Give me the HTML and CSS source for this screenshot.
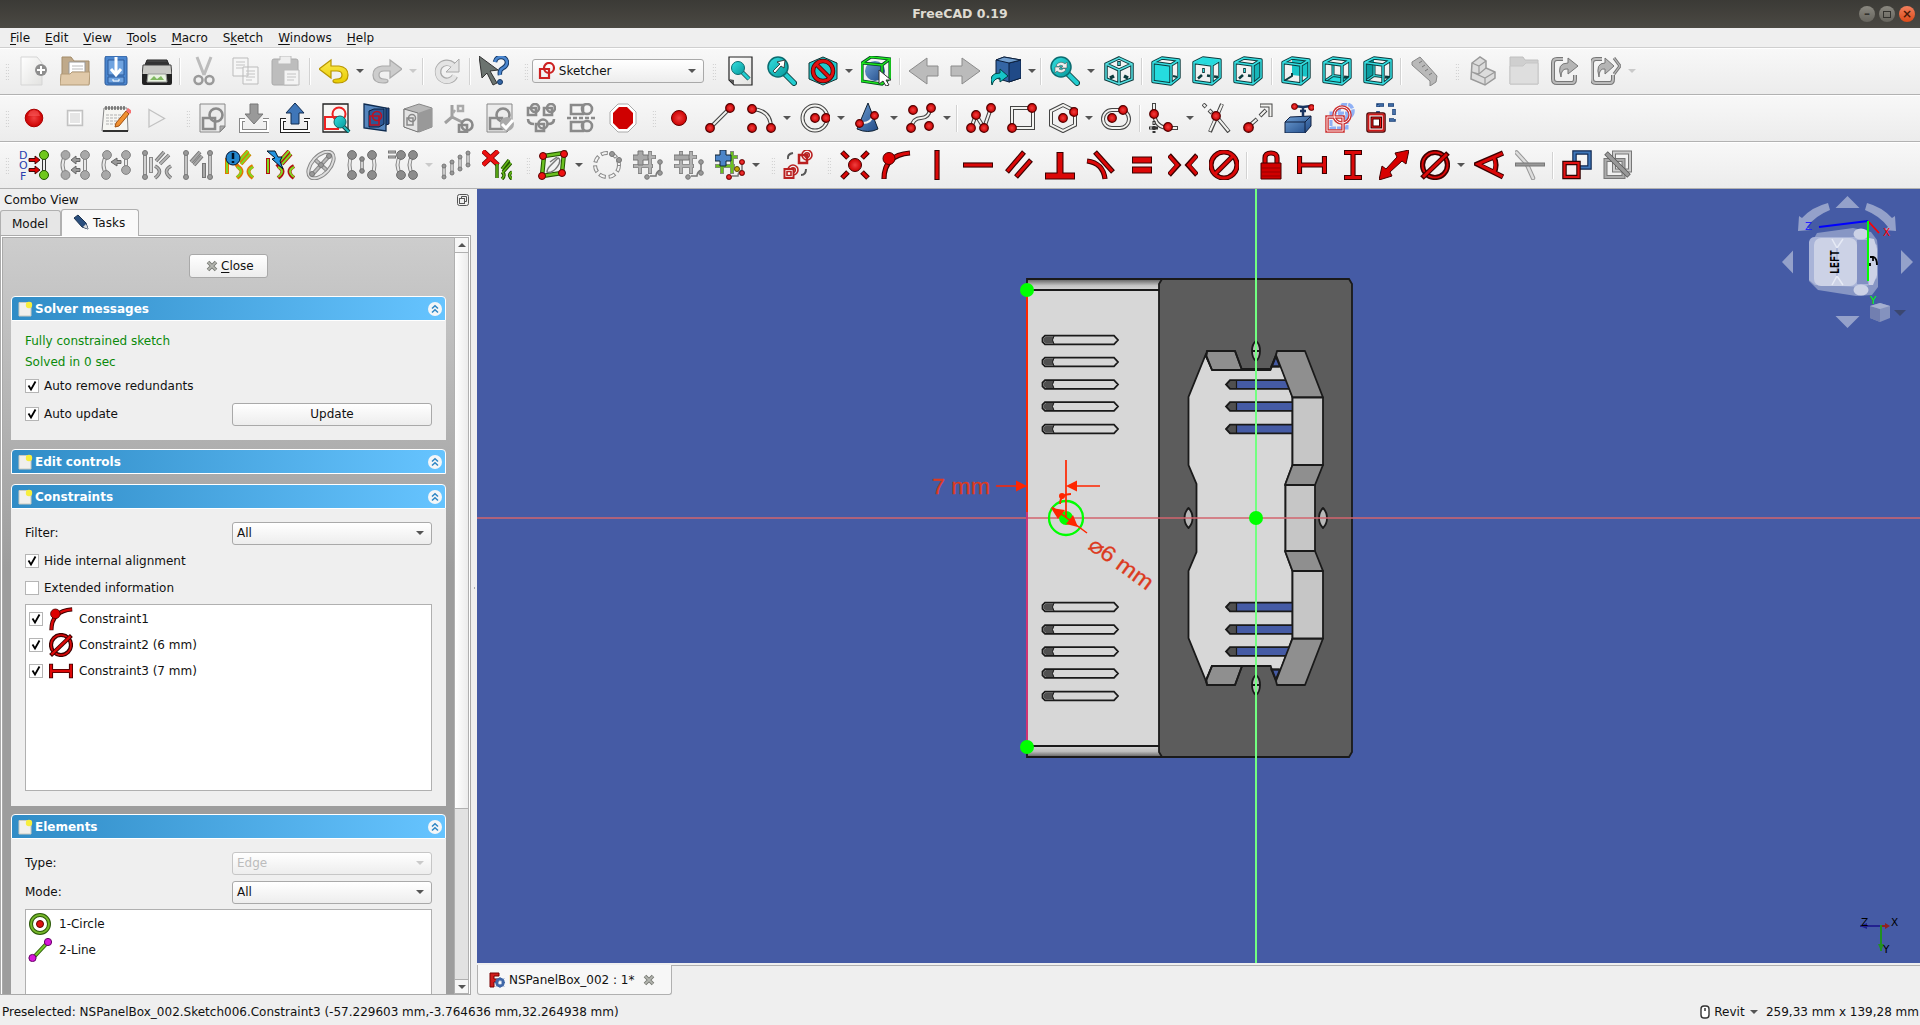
FILE: index.html
```html
<!DOCTYPE html>
<html lang="en">
<head>
<meta charset="utf-8">
<title>FreeCAD 0.19</title>
<link rel="stylesheet" href="styles.css">
</head>
<body>
<svg class="defs" width="0" height="0" aria-hidden="true">
<defs>
<linearGradient id="gPaper" x2="1" y2="1"><stop stop-color="#fff"/><stop offset="1" stop-color="#e2e2e0"/></linearGradient>
<linearGradient id="gBlue" x2="1" y2="1"><stop stop-color="#6f9fd4"/><stop offset="1" stop-color="#204a87"/></linearGradient>
<linearGradient id="gCyan" x2="1" y2="1"><stop stop-color="#34e0e2"/><stop offset="1" stop-color="#06989a"/></linearGradient>
<linearGradient id="gYel" x2="0" y2="1"><stop stop-color="#fce94f"/><stop offset="1" stop-color="#e8cc00"/></linearGradient>
<radialGradient id="gRed"><stop stop-color="#f04040"/><stop offset="1" stop-color="#c00"/></radialGradient>
</defs>
<!-- File and edit -->
<symbol id="new" viewBox="0 0 30 30"><path d="M2 1h16l5 6v22H2z" fill="url(#gPaper)" stroke="#d5d5d5"/><circle cx="22" cy="14" r="6" fill="#8e8e8e"/><path d="M22 10v8M18 14h8" stroke="#fff" stroke-width="2"/></symbol>
<symbol id="open" viewBox="0 0 30 30"><path d="M2 28V1h9l3 4h15v23z" fill="#bfa98a" stroke="#a38b68"/><path d="M9 6h16v17H9z" fill="#fff" stroke="#999"/><path d="M12 10h11M12 13h11M12 16h11" stroke="#bbb"/><path d="M0 29l1-11h9l2-2h18l-1 13z" fill="#e0c9a9" stroke="#b39b78"/></symbol>
<symbol id="save" viewBox="0 0 30 30"><rect x="4" y="0" width="22" height="29" rx="2" fill="#4a86cf" stroke="#2c5a9a"/><path d="M7 4h16v15H7zM7 21h16v6H7z" fill="#6fa3e0" stroke="#2c5a9a"/><path d="M15 1v17M10 13l5 6 5-6" stroke="#fff" stroke-width="3" fill="none"/><path d="M12 23v2h6v-2" stroke="#fff" fill="none"/></symbol>
<symbol id="print" viewBox="0 0 30 30"><path d="M5 4h20l2 5H3z" fill="#555" stroke="#222"/><path d="M1 9h28l1 11H0z" fill="#c9c9c5" stroke="#444"/><path d="M0 18h30v9q0 2-2 2H2q-2 0-2-2z" fill="#222"/><path d="M6 18h18l1 8H5z" fill="#e9f3e1" stroke="#999"/><path d="M8 24l4-4 3 3 4-3 3 4z" fill="#80b860"/><path d="M4 7h22" stroke="#333" stroke-width="3"/></symbol>
<symbol id="cut" viewBox="0 0 30 30"><path d="M8 1l7 18M22 1l-7 18" stroke="#bcbcbc" stroke-width="3"/><circle cx="9.500" cy="24" r="4" fill="none" stroke="#9a9a9a" stroke-width="2.500"/><circle cx="20.500" cy="24" r="4" fill="none" stroke="#9a9a9a" stroke-width="2.500"/></symbol>
<symbol id="copy" viewBox="0 0 30 30"><path d="M3 2h15v18H3zM13 11h15v17H13z" fill="#f6f6f6" stroke="#bbb"/><path d="M6 6h9M6 9h9M6 12h7M16 15h9M16 18h9M16 21h9M16 24h6" stroke="#c4c4c4"/></symbol>
<symbol id="paste" viewBox="0 0 30 30"><rect x="1" y="3" width="26" height="26" rx="2" fill="#bdbdbd" stroke="#aaa"/><path d="M9 0h11v8H7V4h2z" fill="#eee" stroke="#bbb"/><path d="M13 14h15v15H13z" fill="#f4f4f4" stroke="#bbb"/><path d="M16 18h9M16 21h9M16 24h7" stroke="#c4c4c4"/></symbol>
<symbol id="undo" viewBox="0 0 30 30"><path d="M0 13L12 4v6h8q9 1 9 9 0 8-10 8-5 0-5-2t4-2q5 0 5-4t-5-4h-6v7z" fill="url(#gYel)" stroke="#b89600" stroke-width="1.200"/></symbol>
<symbol id="redo" viewBox="0 0 30 30"><path d="M30 13L18 4v6h-8q-9 1-9 9 0 8 10 8 5 0 5-2t-4-2q-5 0-5-4t5-4h6v7z" fill="#ccc" stroke="#aaa" stroke-width="1.200"/></symbol>
<symbol id="refresh" viewBox="0 0 30 30"><path d="M23 20a9 9 0 1 1-2-11" fill="none" stroke="#aaa" stroke-width="6.500"/><path d="M27 3v13H14z" fill="#e4e4e4" stroke="#aaa"/><path d="M23 19.500a9 9 0 1 1-2-10" fill="none" stroke="#e4e4e4" stroke-width="4.500"/></symbol>
<symbol id="what" viewBox="0 0 30 30"><path d="M0 0l19 14-8 1 7 12-4 2-6-12-5 5z" fill="#6b736f" stroke="#333"/><path d="M16 6q1-5 6-5t6 5q0 4-4 6t-3 7" fill="none" stroke="#173a66" stroke-width="4.500"/><path d="M16 6q1-5 6-5t6 5q0 4-4 6t-3 7" fill="none" stroke="#4a86cf" stroke-width="2.500"/><circle cx="21" cy="26" r="2.500" fill="#3465a4" stroke="#173a66"/></symbol>
<!-- View -->
<symbol id="mag" viewBox="0 0 30 30"><path d="M17 17l10 10" stroke="#144" stroke-width="6" stroke-linecap="round"/><path d="M17 17l10 10" stroke="#22cdd0" stroke-width="4" stroke-linecap="round"/><circle cx="11" cy="11" r="10" fill="url(#gCyan)" stroke="#0b6c70" stroke-width="1.500"/></symbol>
<symbol id="fitall" viewBox="0 0 30 30"><path d="M3 1h23v28H8l-5-5z" fill="url(#gPaper)" stroke="#222" stroke-width="1.200"/><path d="M3 23l5 1v5z" fill="#555"/><path d="M15 15l8 8" stroke="#144" stroke-width="4.500"/><path d="M15 15l8 8" stroke="#22cdd0" stroke-width="3"/><circle cx="12" cy="12" r="6.500" fill="url(#gCyan)" stroke="#0b6c70"/></symbol>
<symbol id="fitsel" viewBox="0 0 30 30"><use href="#mag"/><path d="M6 15l7-7-3-2 8-2-1 8-3-2-6 7z" fill="#fff" stroke="#222" stroke-width=".8"/></symbol>
<symbol id="sync" viewBox="0 0 30 30"><use href="#mag"/><path d="M6 9q5-5 9-1l2-2v6h-6l2-2q-3-2-5 1zM16 14q-5 5-9 1l-2 2v-6h6l-2 2q3 2 5-1z" fill="#eee" stroke="#444" stroke-width=".5"/></symbol>
<symbol id="style" viewBox="0 0 30 30"><path d="M15 1l14 6v16l-14 6-14-6V7z" fill="#20c8cc" stroke="#133"/><circle cx="15" cy="15" r="10" fill="none" stroke="#400" stroke-width="4.500"/><path d="M8 8l14 14" stroke="#400" stroke-width="4.500"/><circle cx="15" cy="15" r="10" fill="none" stroke="#e01010" stroke-width="2.800"/><path d="M8 8l14 14" stroke="#e01010" stroke-width="2.800"/></symbol>
<symbol id="bbox" viewBox="0 0 30 30"><circle cx="14" cy="15" r="10" fill="url(#gBlue)"/><path d="M1 7l9-6 19 2v19l-8 6-20-3zM1 7l20 2v19M21 9l8-6" fill="none" stroke="#042" stroke-width="3.200"/><path d="M1 7l9-6 19 2v19l-8 6-20-3zM1 7l20 2v19M21 9l8-6" fill="none" stroke="#1ce61c" stroke-width="1.500"/><path d="M18 14l12 10h-5l3 5-3 1-3-5-4 3z" fill="#fff" stroke="#333"/></symbol>
<symbol id="back" viewBox="0 0 30 30"><path d="M0 15L18 2v8h11v10H18v8z" fill="#bbb" stroke="#8b8b8b"/></symbol>
<symbol id="fwd" viewBox="0 0 30 30"><path d="M30 15L12 2v8H1v10h11v8z" fill="#bbb" stroke="#8b8b8b"/></symbol>
<symbol id="golink" viewBox="0 0 30 30"><path d="M5 4l8-3 17 3v18l-12 4-13-4z" fill="#3465a4" stroke="#0b1f3c"/><path d="M18 7l12-3v18l-12 4z" fill="#204a87" stroke="#0b1f3c"/><path d="M5 4l8-3 17 3-12 3z" fill="#729fcf" stroke="#0b1f3c"/><path d="M1 29q-4-12 8-12v-4l8 7-8 6v-4q-6 0-8 7z" fill="#16c6c8" stroke="#044"/></symbol>
<symbol id="cube" viewBox="0 0 30 30"><path d="M2 6.500L11 2l17 2v17.500L20 28 2 25.500zM2 6.500L20 9l8-5M20 9v19" fill="none" stroke="#0d3b3d" stroke-width="3.400" stroke-linejoin="round"/><path d="M2 6.500L11 2l17 2v17.500L20 28 2 25.500zM2 6.500L20 9l8-5M20 9v19" fill="none" stroke="#35dfe2" stroke-width="1.500" stroke-linejoin="round"/></symbol>
<symbol id="hid" viewBox="0 0 30 30"><path d="M11.500 12v5M6 22.500l4-3.500M15 19.500l3 .5M22 20.500l4 .5" stroke="#0d3b3d" stroke-width="2.600"/><path d="M11.500 13v3" stroke="#35dfe2"/></symbol>
<symbol id="bk" viewBox="0 0 30 30"><path d="M11 9v10.500L3 25M11 19.500L19 20.500M22 21l5 .5" fill="none" stroke="#0d3b3d" stroke-width="3"/><path d="M11 9v10.500L3 25M11 19.500L19 20.500" fill="none" stroke="#35dfe2" stroke-width="1.200"/></symbol>
<symbol id="iso" viewBox="0 0 30 30"><path d="M15 2l13 6v15l-13 5-13-5V8zM2 8l13 6 13-6M15 14v14M15 5v5M6 22l4-2M20 20l4 2" fill="none" stroke="#0d3b3d" stroke-width="3.500"/><path d="M15 2l13 6v15l-13 5-13-5V8zM2 8l13 6 13-6M15 14v14M15 6v3" fill="none" stroke="#55e0e2" stroke-width="1.500"/></symbol>
<symbol id="vfront" viewBox="0 0 30 30"><path d="M2 6.500L20 9v19L2 25.500z" fill="#25dcdf"/><path d="M22 20l4 1" stroke="#0d3b3d" stroke-width="2"/><use href="#cube"/></symbol>
<symbol id="vtop" viewBox="0 0 30 30"><use href="#hid"/><use href="#cube"/><path d="M3 6.500L11 2l16 2-7 4.500z" fill="#25dcdf"/></symbol>
<symbol id="vright" viewBox="0 0 30 30"><use href="#hid"/><path d="M20 9l8-5v17.500L20 28z" fill="#16b6b9"/><use href="#cube"/></symbol>
<symbol id="vrear" viewBox="0 0 30 30"><path d="M11 2l17 2v17l-17-2z" fill="#19c5c8"/><path d="M11 17v3l-8 5" fill="none" stroke="#0d3b3d" stroke-width="2"/><use href="#cube"/></symbol>
<symbol id="vbottom" viewBox="0 0 30 30"><path d="M2 25.500l9-6 17 2L20 28z" fill="#25dcdf"/><use href="#bk"/><use href="#cube"/></symbol>
<symbol id="vleft" viewBox="0 0 30 30"><path d="M2 6.500L11 2v17.500l-9 6z" fill="#0c9c9f"/><use href="#bk"/><use href="#cube"/></symbol>
<symbol id="ruler" viewBox="0 0 30 30"><path d="M2 6l8-5 17 19-1 6-6 4v-5L2 9z" fill="#b9b9b9" stroke="#888"/><path d="M9 7l3-2M12 11l3-2M15 15l3-2M19 19l3-2" stroke="#777"/></symbol>
<symbol id="part" viewBox="0 0 30 30"><path d="M4 7l8-6 6 4v7l9 4v6l-10 7-14-6z" fill="#dcdcdc" stroke="#9a9a9a" stroke-width="1.500"/><path d="M4 7l7 3 7-5M11 10v8l7-6M4 16l13 6 10-6M17 22v7M11 18l-7-2" fill="none" stroke="#9a9a9a" stroke-width="1.200"/></symbol>
<symbol id="group" viewBox="0 0 30 30"><path d="M1 28V1h13l2 3h13v24z" fill="#cfcfcf" stroke="#c0c0c0"/><path d="M1 10h13l3-3h12v21H1z" fill="#dedede" stroke="#c6c6c6"/></symbol>
<symbol id="lnk" viewBox="0 0 30 30"><path d="M13 3H7q-4 0-4 4v16q0 4 4 4h15q3 0 3-4v-4" fill="none" stroke="#777" stroke-width="4"/><path d="M13 3H7q-4 0-4 4v16q0 4 4 4h15q3 0 3-4v-4" fill="none" stroke="#bbb" stroke-width="2"/><path d="M11 21q-5-14 7-14V2l10 8-10 8v-5q-7-1-7 8z" fill="#b5b5b5" stroke="#777"/></symbol>
<symbol id="lnks" viewBox="0 0 30 30"><path d="M11 3H5q-4 0-4 4v16q0 4 4 4h14q3 0 3-4v-4" fill="none" stroke="#777" stroke-width="4"/><path d="M11 3H5q-4 0-4 4v16q0 4 4 4h14q3 0 3-4v-4" fill="none" stroke="#bbb" stroke-width="2"/><path d="M8 21Q4 7 14 7V2l9 8-9 8v-5q-6-1-6 8z" fill="#b5b5b5" stroke="#777"/><path d="M23 2l6 8-6 8" fill="none" stroke="#777" stroke-width="3"/><path d="M23 2l6 8-6 8" fill="none" stroke="#bbb" stroke-width="1.200"/></symbol>
<!-- Macro -->
<symbol id="rec" viewBox="0 0 30 30"><circle cx="15" cy="15" r="8.800" fill="url(#gRed)" stroke="#a00"/><path d="M9 13q1-6 6-6t6 6" fill="#f66" opacity=".5"/></symbol>
<symbol id="stop" viewBox="0 0 30 30"><path d="M7.500 7.500h15v15h-15z" fill="#eee" stroke="#c2c2c2" stroke-width="1.500"/><path d="M9.500 9.500h11v11h-11z" fill="#e6e6e6" stroke="#fff"/></symbol>
<symbol id="edit" viewBox="0 0 30 30"><path d="M3 5h23l1 23H1z" fill="#f6f6f2" stroke="#888"/><path d="M2 28h25" stroke="#222" stroke-width="1.800"/><path d="M5 7V3m3 4V3m3 4V3m3 4V3m3 4V3m3 4V3m3 4V3" stroke="#555" stroke-width="1.300"/><path d="M5 12h17M5 15h14M5 18h12M5 21h10" stroke="#b0b0b0" stroke-dasharray="3 1"/><path d="M15 20L25 8l3 3-10 12-4 1z" fill="#f09030" stroke="#a05010"/><path d="M25 8l2-3 4 3-2 3z" fill="#f57070"/></symbol>
<symbol id="play" viewBox="0 0 30 30"><path d="M7 6.500l15.500 9L7 24z" fill="#f2f2f2" stroke="#c2c2c2" stroke-width="1.300"/></symbol>
<!-- Sketcher -->
<symbol id="skg" viewBox="0 0 30 30"><path d="M2 1h25v23l-5 5H2z" fill="#ececec" stroke="#888"/><circle cx="18" cy="12" r="6.500" class="sk3"/><path d="M5 15h12v11H5z" class="sk3"/><path d="M27 23l-5 6v-6z" fill="#aaa" stroke="#888"/></symbol>
<symbol id="tray" viewBox="0 0 30 30"><path d="M6 17H2v11h27V17h-5" fill="none" stroke="currentColor" stroke-width="4"/><path d="M6 17H2v11h27V17h-5" fill="none" stroke="#fff" stroke-width="2"/></symbol>
<symbol id="tin" viewBox="0 0 30 30"><use href="#tray" color="#888"/><path d="M11 1h8v10h5l-9 10-9-10h5z" fill="#999" stroke="#777"/></symbol>
<symbol id="tout" viewBox="0 0 30 30"><use href="#tray" color="#222"/><path d="M15 0l9 10h-5v11h-8V10H6z" fill="#3f76b8" stroke="#102c50"/></symbol>
<symbol id="skv" viewBox="0 0 30 30"><path d="M2 1h25v28H2z" fill="#f6f6f4" stroke="#222" stroke-width="1.300"/><circle cx="18" cy="11" r="6.500" fill="none" stroke="#e22" stroke-width="2"/><path d="M4 14h13v12H4z" fill="none" stroke="#e22" stroke-width="2"/><path d="M22 23l6 6" stroke="#144" stroke-width="4"/><path d="M22 23l6 6" stroke="#20b8ba" stroke-width="2"/><circle cx="19" cy="19" r="6" fill="url(#gCyan)" stroke="#166"/></symbol>
<symbol id="sect" viewBox="0 0 30 30"><path d="M15 6l12-1v16l-6 2z" fill="#204a87" stroke="#102040"/><path d="M2 1l22 4v23L2 25z" fill="#5585bd" stroke="#102c50" stroke-width="1.300"/><path d="M7 8l5-2h10v15l-5 3H7z" fill="#2d5896" stroke="#0b1f3c"/><circle cx="15" cy="13" r="4.500" fill="none" stroke="#c01020" stroke-width="1.600"/><path d="M8 13h9v9H8z" fill="none" stroke="#c01020" stroke-width="1.600"/></symbol>
<symbol id="mapf" viewBox="0 0 30 30"><path d="M1 6l15-5 13 4v19l-13 5-15-5z" fill="#b8b8b8" stroke="#888"/><path d="M1 6l14 4v19L1 24z" fill="#e4e4e4" stroke="#777"/><path d="M15 10l14-5v19l-13 5z" fill="#999"/><circle cx="9" cy="15" r="3.500" fill="none" stroke="#888" stroke-width="1.500"/><path d="M4 15h6v7H4z" fill="none" stroke="#888" stroke-width="1.500"/></symbol>
<symbol id="reor" viewBox="0 0 30 30"><path d="M8 2v12L1 20M8 14l10 5" fill="none" stroke="#a0a0a0" stroke-width="3"/><path d="M14 3h5v5h-5zM11 7l-2 3" fill="none" stroke="#aaa" stroke-width="2.500"/><circle cx="23" cy="22" r="5.500" class="sk3"/><path d="M15 22h8v7h-8z" class="sk3"/></symbol>
<symbol id="vali" viewBox="0 0 30 30"><use href="#skg"/><circle cx="22" cy="21" r="7" fill="#aaa"/><path d="M17 21l4 4 7-8" fill="none" stroke="#fff" stroke-width="3"/></symbol>
<symbol id="merge" viewBox="0 0 30 30"><g class="sk3"><circle cx="9" cy="5" r="4"/><path d="M2 5h8v7H2z"/><circle cx="25" cy="5" r="4"/><path d="M18 5h8v7h-8z"/><circle cx="17" cy="21" r="4.500"/><path d="M10 21h8v7h-8zM2 16q0 5 6 5M28 16q0 5-6 5"/></g></symbol>
<symbol id="mirr" viewBox="0 0 30 30"><g class="sk3"><path d="M4 2h12v9H4zM4 19h12v9H4z"/><circle cx="20" cy="6" r="5"/><circle cx="20" cy="23" r="5"/><path d="M0 15h30" stroke-dasharray="4 2"/></g></symbol>
<symbol id="stopsign" viewBox="0 0 30 30"><path d="M10 1h10l8 8v12l-8 8H10l-8-8V9z" fill="#fff" stroke="#aaa"/><path d="M11 4h8l6 6v10l-6 6h-8l-6-6V10z" fill="#cf0000"/></symbol>
<symbol id="nd" viewBox="0 0 10 10"><circle cx="5" cy="5" r="4.300" fill="url(#gRed)" stroke="#500" stroke-width="1.200"/></symbol>
<symbol id="point" viewBox="0 0 30 30"><circle cx="15" cy="15" r="7.500" fill="url(#gRed)" stroke="#600"/></symbol>
<symbol id="line" viewBox="0 0 30 30"><path d="M5 25L25 5" class="k"/><path d="M5 25L25 5" class="w"/><use href="#nd" x="0" y="20" width="10" height="10"/><use href="#nd" x="20" y="0" width="10" height="10"/></symbol>
<symbol id="arc" viewBox="0 0 30 30"><path d="M6 6q19 1 19 19" class="k"/><path d="M6 6q19 1 19 19" class="w"/><use href="#nd" x="1" y="1" width="10" height="10"/><use href="#nd" x="1" y="20" width="10" height="10"/><use href="#nd" x="20" y="20" width="10" height="10"/></symbol>
<symbol id="circ" viewBox="0 0 30 30"><circle cx="15" cy="15" r="12.500" class="k"/><circle cx="15" cy="15" r="12.500" class="w"/><use href="#nd" x="10" y="10" width="10" height="10"/><use href="#nd" x="21" y="10" width="10" height="10"/></symbol>
<symbol id="conic" viewBox="0 0 30 30"><path d="M15 0l10 26q-10 5-21 0z" fill="url(#gBlue)" stroke="#123"/><path d="M8 20q10 1 12-8" class="w"/><use href="#nd" x="2" y="16" width="9" height="9"/><use href="#nd" x="17" y="8" width="9" height="9"/></symbol>
<symbol id="bsp" viewBox="0 0 30 30"><path d="M5 25q2-10 10-10t9-9" class="k"/><path d="M5 25q2-10 10-10t9-9" class="w"/><use href="#nd" x="2" y="2" width="10" height="10"/><use href="#nd" x="0" y="20" width="10" height="10"/><use href="#nd" x="20" y="0" width="10" height="10"/><use href="#nd" x="18" y="18" width="10" height="10"/></symbol>
<symbol id="pline" viewBox="0 0 30 30"><path d="M5 25l5-13 8 13 7-20" class="k"/><path d="M5 25l5-13 8 13 7-20" class="w"/><use href="#nd" x="0" y="20" width="10" height="10"/><use href="#nd" x="5" y="7" width="10" height="10"/><use href="#nd" x="13" y="20" width="10" height="10"/><use href="#nd" x="20" y="0" width="10" height="10"/></symbol>
<symbol id="rect" viewBox="0 0 30 30"><path d="M5 5h21v20H5z" class="k"/><path d="M5 5h21v20H5z" class="w"/><use href="#nd" x="0" y="20" width="10" height="10"/><use href="#nd" x="20" y="0" width="10" height="10"/></symbol>
<symbol id="hex" viewBox="0 0 30 30"><path d="M15 2l12 6v14l-12 6-12-6V8z" class="k"/><path d="M15 2l12 6v14l-12 6-12-6V8z" class="w"/><use href="#nd" x="10" y="10" width="10" height="10"/><use href="#nd" x="21" y="4" width="10" height="10"/></symbol>
<symbol id="slot" viewBox="0 0 30 30"><rect x="2" y="7" width="26" height="18" rx="9" class="k"/><rect x="2" y="7" width="26" height="18" rx="9" class="w"/><use href="#nd" x="6" y="10" width="10" height="10"/><use href="#nd" x="17" y="2" width="10" height="10"/></symbol>
<symbol id="fillet" viewBox="0 0 30 30"><path d="M5 0v10q1 15 15 15h9" class="k"/><path d="M5 1v9q1 15 15 15h8" class="w"/><path d="M5 18v12M0 25h10" stroke="#333" stroke-width="3" stroke-dasharray="4 1"/><path d="M5 19v2M1 25h2" stroke="#fff"/><use href="#nd" x="0" y="6" width="10" height="10"/><use href="#nd" x="14" y="19" width="10" height="10"/></symbol>
<symbol id="trim" viewBox="0 0 30 30"><path d="M20 1L8 29M14 13l13 16" class="k"/><path d="M20 1.500L8 28M14 13l12.500 15" class="w"/><path d="M1 1l3 3M7 7l3 3" class="k"/><path d="M1.500 1.500l2 2M7.500 7.500l2 2" class="w"/><use href="#nd" x="9" y="8" width="10" height="10"/></symbol>
<symbol id="extend" viewBox="0 0 30 30"><path d="M17 2.500h10.500V14" class="k"/><path d="M17.500 2.500h10v11" class="w"/><path d="M5 24l9-8M17 13l6-6" class="k"/><path d="M5 24l8.500-7.500M17.500 12.500l5-5" class="w"/><use href="#nd" x="0" y="19" width="11" height="11"/></symbol>
<symbol id="ext" viewBox="0 0 30 30"><path d="M1 19l5-5 21-1v10l-6 7H1z" fill="url(#gBlue)" stroke="#102040"/><path d="M1 19h20v10M21 19l6-6" stroke="#102040" fill="none"/><path d="M10 3l9 1 8-1M19 4v10M16 8h6" stroke="#1a3560" stroke-width="2.500" fill="none"/><use href="#nd" x="7" y="0" width="7" height="7"/><use href="#nd" x="24" y="1" width="7" height="7"/></symbol>
<symbol id="carbon" viewBox="0 0 30 30"><circle cx="21" cy="8" r="7" fill="none" stroke="#8fb0f5" stroke-width="3.500" stroke-dasharray="6 1"/><path d="M6 10h16v15H6z" fill="none" stroke="#8fb0f5" stroke-width="3" stroke-dasharray="6 1"/><circle cx="17" cy="12" r="8" fill="none" stroke="#c33" stroke-width="3.500"/><path d="M2 14h16v14H2z" fill="none" stroke="#c33" stroke-width="3.500"/><circle cx="17" cy="12" r="8" fill="none" stroke="#fee"/><path d="M2 14h16v14H2z" fill="none" stroke="#fee"/></symbol>
<symbol id="constr" viewBox="0 0 30 30"><path d="M12 2h16v15H12z" fill="none" stroke="#153c74" stroke-width="3.500" stroke-dasharray="6 4"/><path d="M12 2h16v15H12z" fill="none" stroke="#6b96d0" stroke-width="1.200" stroke-dasharray="5 5" stroke-dashoffset="-.5"/><rect x="1" y="10" width="18" height="19" rx="2" fill="#fff" stroke="#400" stroke-width="1.500"/><rect x="2.500" y="11.500" width="15" height="16" fill="#fff" stroke="#d01818" stroke-width="1.800"/><path d="M6 15h8.500v9H6z" fill="#fff" stroke="#400" stroke-width="3"/><path d="M6 15h8.500v9H6z" fill="none" stroke="#e11"/></symbol>
<!-- Sketcher tools -->
<symbol id="dof" viewBox="0 0 30 30"><g class="doft"><text x="0" y="9">D</text><text x="0" y="19">O</text><text x="1" y="29.500">F</text></g><path d="M25 5v20" stroke="#333" stroke-width="4"/><path d="M25 5v20" stroke="#eee" stroke-width="2"/><path d="M10 8.500h6V6l5 4-5 4v-2.500h-6zM10 18.500h6V16l5 4-5 4v-2.500h-6z" fill="#d00" stroke="#300" stroke-width=".9"/><circle cx="25" cy="5" r="4.500" fill="#6fc81c" stroke="#250"/><circle cx="25" cy="25" r="4.500" fill="#6fc81c" stroke="#250"/></symbol>
<symbol id="g4" viewBox="0 0 30 30"><path d="M6 5q-7 10 0 20M25 5v20" stroke="#888" stroke-width="4" fill="none"/><path d="M6 5q-7 10 0 20M25 5v20" stroke="#e8e8e8" stroke-width="2" fill="none"/><g fill="#a8a8a8" stroke="#828282"><circle cx="5.500" cy="5" r="4.400"/><circle cx="5.500" cy="25" r="4.400"/><circle cx="25" cy="5" r="4.400"/><circle cx="25" cy="25" r="4.400"/></g></symbol>
<symbol id="ga" viewBox="0 0 30 30"><use href="#g4"/><path d="M20 8.500h-4V6l-5 4 5 4v-2.500h4zM20 18.500h-4V16l-5 4 5 4v-2.500h4z" fill="#999" stroke="#666"/></symbol>
<symbol id="gb" viewBox="0 0 30 30"><path d="M6 5q-7 10 0 20M25 5v15" stroke="#888" stroke-width="4" fill="none"/><path d="M6 5q-7 10 0 20M25 5v15" stroke="#e8e8e8" stroke-width="2" fill="none"/><g fill="#a8a8a8" stroke="#828282"><circle cx="6" cy="5" r="4.400"/><circle cx="5" cy="25" r="4.400"/><circle cx="25" cy="5" r="4.400"/><circle cx="25" cy="20" r="4.400"/></g><path d="M20 10.500h-4V8l-6 4 6 4v-2.500h4z" fill="#999" stroke="#666"/></symbol>
<symbol id="gwedge" viewBox="0 0 30 30"><path d="M14 11l8-9M18 14l9-9M13 16q9 5 0 12M29 16q-9 5 0 12" stroke="#777" stroke-width="3.600" fill="none"/><path d="M14 11l8-9M18 14l9-9M13 16q9 5 0 12M29 16q-9 5 0 12" stroke="#b5b5b5" stroke-width="1.800" fill="none"/></symbol>
<symbol id="gc" viewBox="0 0 30 30"><path d="M3 3v24M9 7v16" stroke="#888" stroke-width="4"/><path d="M3 3v24M9 8v14" stroke="#d2d2d2" stroke-width="2"/><use href="#gwedge"/><g fill="#999" stroke="#777"><circle cx="3" cy="3" r="2.500"/><circle cx="3" cy="27" r="2.500"/></g></symbol>
<symbol id="gd" viewBox="0 0 30 30"><path d="M3 3v24M27 3v24" stroke="#777" stroke-width="3.600"/><path d="M3 3v24M27 3v24" stroke="#e0e0e0" stroke-width="1.500"/><path d="M8 12l9-10M11 15l8-9M21 13v15" stroke="#777" stroke-width="4"/><path d="M8 12l9-10M11 15l8-9M21 14v13" stroke="#a8a8a8" stroke-width="2"/><g fill="#999" stroke="#777"><circle cx="3" cy="3" r="2.500"/><circle cx="3" cy="27" r="2.500"/><circle cx="27" cy="3" r="2.500"/><circle cx="27" cy="27" r="2.500"/></g></symbol>
<symbol id="cfl" viewBox="0 0 30 30"><path d="M3 8v16M15 11l9-10M17 14l9-10M12 14l4 5M13 16q9 5 0 12M29 16q-9 5 0 12" stroke="currentColor" stroke-width="4" fill="none"/><path d="M3 9v14M15 11l9-10M17 14l9-10M13 17q8 4 0 10M29 17q-8 4 0 10" stroke="#80d820" stroke-width="2" fill="none"/></symbol>
<symbol id="warn" viewBox="0 0 30 30"><use href="#cfl" color="#e07800"/><circle cx="9" cy="8" r="7" fill="#2486cc" stroke="#013"/><path d="M9 3v6M9 11v2" stroke="#012" stroke-width="2.500"/></symbol>
<symbol id="bolt" viewBox="0 0 30 30"><use href="#cfl" color="#b01010"/><path d="M2 1h8l3 6 4 0-2 4 3 8L7 9l3-1z" fill="#2494e0" stroke="#012"/></symbol>
<symbol id="ell" viewBox="0 0 30 30"><g transform="rotate(-48 15 15)" fill="none"><ellipse cx="15" cy="15" rx="16" ry="9" stroke="#888" stroke-width="4"/><ellipse cx="15" cy="15" rx="16" ry="9" stroke="#ddd" stroke-width="2"/><path d="M3 15h24M15 7v16" stroke="#888" stroke-width="4"/><path d="M4 15h22M15 8v14" stroke="#bbb" stroke-width="2"/></g><g fill="#999" stroke="#777"><circle cx="15" cy="15" r="2.500"/><circle cx="6" cy="24" r="2.500"/><circle cx="23" cy="6" r="2.500"/></g></symbol>
<symbol id="symg" viewBox="0 0 30 30"><path d="M5 5q-5 10 0 20M25 5q5 10 0 20" stroke="#888" stroke-width="4" fill="none"/><path d="M5 5q-5 10 0 20M25 5q5 10 0 20" stroke="#e8e8e8" stroke-width="2" fill="none"/><path d="M15 9v13" stroke="#777" stroke-width="3.500"/><path d="M15 9v13" stroke="#eee" stroke-width="1.500"/><g fill="#8c8c8c" stroke="#6c6c6c"><circle cx="5" cy="5" r="4.400"/><circle cx="5" cy="25" r="4.400"/><circle cx="25" cy="5" r="4.400"/><circle cx="25" cy="25" r="4.400"/><circle cx="15" cy="9" r="2.300"/><circle cx="15" cy="21" r="2.300"/></g></symbol>
<symbol id="clone" viewBox="0 0 30 30"><path d="M0 2h8M0 7h8" stroke="#777" stroke-width="3.200"/><path d="M1 2h6M1 7h6" stroke="#bbb" stroke-width="1.200"/><path d="M13 5q-7 10 0 20M25 5q-7 10 0 20" stroke="#888" stroke-width="4" fill="none"/><path d="M13 5q-7 10 0 20M25 5q-7 10 0 20" stroke="#e8e8e8" stroke-width="2" fill="none"/><g fill="#8c8c8c" stroke="#6c6c6c"><circle cx="13" cy="5" r="4.400"/><circle cx="13" cy="25" r="4.400"/><circle cx="25" cy="5" r="4.400"/><circle cx="25" cy="25" r="4.400"/></g></symbol>
<symbol id="rarr" viewBox="0 0 30 30"><path d="M3 16v11M11 12v11M19 7v12M27 3v12" stroke="#888" stroke-width="3.500"/><path d="M3 16v11M11 12v11M19 7v12M27 3v12" stroke="#ddd" stroke-width="1.500"/><g fill="#999" stroke="#777"><circle cx="3" cy="16" r="2"/><circle cx="3" cy="27" r="2"/><circle cx="11" cy="12" r="2"/><circle cx="11" cy="23" r="2"/><circle cx="19" cy="7" r="2"/><circle cx="19" cy="19" r="2"/><circle cx="27" cy="3" r="2"/><circle cx="27" cy="15" r="2"/></g></symbol>
<symbol id="delc" viewBox="0 0 30 30"><path d="M1 1l15 14M16 1L1 15" stroke="#700" stroke-width="5"/><path d="M1 1l15 14M16 1L1 15" stroke="#e11" stroke-width="3.500"/><path d="M15 14v14M20 19l7-9M21 22l8-9M20 22q4 3 0 7M30 22q-5 3 0 7" stroke="#250" stroke-width="3.500" fill="none"/><path d="M15 14v14M20 19l7-9M21 22l8-9M20 22q4 3 0 7M30 22q-5 3 0 7" stroke="#65b818" stroke-width="1.500" fill="none"/></symbol>
<symbol id="bpoly" viewBox="0 0 30 30"><path d="M4 26L6 6l20-3-2 20z" fill="none" stroke="#250" stroke-width="4.500"/><path d="M4 26L6 6l20-3-2 20z" fill="none" stroke="#6bc020" stroke-width="2.500"/><path d="M9 22q0-3 4-7t7-7q3 1 1 6-3 6-8 8-3 1-4 0zM12 12l7-5" stroke="#777" stroke-width="1.500" fill="#f2f2f2"/><g fill="#e11" stroke="#500"><circle cx="4" cy="26" r="3.500"/><circle cx="5" cy="6" r="3.500"/><circle cx="26" cy="4" r="3.500"/><circle cx="24" cy="23" r="3.500"/></g></symbol>
<symbol id="bdeg" viewBox="0 0 30 30"><circle cx="15" cy="15" r="12" fill="none" stroke="#888" stroke-width="4" stroke-dasharray="7 3"/><circle cx="15" cy="15" r="12" fill="none" stroke="#f4f4f4" stroke-width="2" stroke-dasharray="5 5" stroke-dashoffset="-1"/><g fill="#999" stroke="#777"><circle cx="20" cy="4" r="2.500"/><circle cx="27" cy="10" r="2.500"/></g></symbol>
<symbol id="hash" viewBox="0 0 30 30"><path d="M7 1v23M17 1v23M0 7h23M0 16h20" stroke="#555" stroke-opacity=".7" stroke-width="4"/><path d="M7 2v21M17 2v21M1 7h21M1 16h18" stroke="currentColor" stroke-width="2.400"/><path d="M27 14v6q-4 2-4 6h-6" fill="none" stroke="#777" stroke-width="1.500"/></symbol>
<symbol id="bk1" viewBox="0 0 30 30"><use href="#hash" color="#b2b2b2"/><path d="M5 1h5v4h5v5h-5v5H5v-5H0V5h5z" fill="#a8a8a8" stroke="#777"/><g fill="#999" stroke="#777"><circle cx="27" cy="12" r="2.300"/><circle cx="27" cy="23" r="2.300"/><circle cx="14" cy="27" r="2.300"/></g></symbol>
<symbol id="bk2" viewBox="0 0 30 30"><use href="#hash" color="#b2b2b2"/><path d="M0 5h15v5H0z" fill="#a8a8a8" stroke="#777"/><g fill="#999" stroke="#777"><circle cx="27" cy="12" r="2.300"/><circle cx="27" cy="23" r="2.300"/><circle cx="14" cy="27" r="2.300"/></g></symbol>
<symbol id="bk3" viewBox="0 0 30 30"><use href="#hash" color="#6bc020"/><path d="M5 0h6v5h5v6h-5v5H5v-5H0V5h5z" fill="#4c85c8" stroke="#123"/><circle cx="22" cy="19" r="2.500" fill="#c4a000" stroke="#540"/><use href="#nd" x="24" y="9" width="6" height="6"/><use href="#nd" x="24" y="20" width="6" height="6"/><use href="#nd" x="11" y="24" width="6" height="6"/></symbol>
<symbol id="vspace" viewBox="0 0 30 30"><g fill="none" stroke="#b92020" stroke-width="1.600"><circle cx="24" cy="5" r="5"/><circle cx="24" cy="5" r="2.300"/><path d="M16 5h8v8h-8z" stroke-width="2.500"/><circle cx="10" cy="20" r="5"/><circle cx="10" cy="20" r="2.300"/><path d="M1.500 19h9v9h-9z" stroke-width="2" fill="#fff"/><path d="M4 21.500h4v4H4z"/></g><path d="M10 3q-6 1-5 6M18 25q5 0 5-6" fill="none" stroke="#555" stroke-width="2"/></symbol>
<!-- Constraints -->
<symbol id="coin" viewBox="0 0 30 30"><path d="M2 2l6 6M28 2l-6 6M2 28l6-6M28 28l-6-6" class="rk"/><path d="M2.500 2.500l5 5M27.500 2.500l-5 5M2.500 27.500l5-5M27.500 27.500l-5-5" class="rr"/><circle cx="15" cy="15" r="6.500" fill="url(#gRed)" stroke="#400"/></symbol>
<symbol id="pon" viewBox="0 0 30 30"><path d="M3 29Q3 5 29 3" class="rk"/><path d="M3 28.500Q3 5 28.500 3" class="rr"/><circle cx="8" cy="8.500" r="6" fill="#d00" stroke="#400"/></symbol>
<symbol id="cv" viewBox="0 0 30 30"><path d="M15 0v30" class="rk"/><path d="M15 1v28" class="rr"/></symbol>
<symbol id="ch" viewBox="0 0 30 30"><path d="M0 15h30" class="rk"/><path d="M1 15h28" class="rr"/></symbol>
<symbol id="cpar" viewBox="0 0 30 30"><path d="M3 22L20 2M12 27l15-17" class="rk"/><path d="M3.500 21.300L19.300 2.800M12.500 26.300l13.800-15.600" class="rr"/></symbol>
<symbol id="cperp" viewBox="0 0 30 30"><path d="M15 2v23M0 26h30" class="rk fat"/><path d="M15 3v23M1 26h28" class="rr fat"/></symbol>
<symbol id="ctan" viewBox="0 0 30 30"><path d="M1 11q16 2 18 18M9 2l18 20" class="rk"/><path d="M1.500 11q15.500 2 17.500 17.500M9.700 2.700l16.500 18.500" class="rr"/></symbol>
<symbol id="ceq" viewBox="0 0 30 30"><path d="M5 10h20M5 20h20" class="rk fat"/><path d="M6 10h18M6 20h18" class="rr fat"/></symbol>
<symbol id="csym" viewBox="0 0 30 30"><path d="M1 5l9 10-9 10M29 5l-9 10 9 10" class="rk"/><path d="M1.500 6l8 9-8 9M28.500 6l-8 9 8 9" class="rr"/></symbol>
<symbol id="cblk" viewBox="0 0 30 30"><circle cx="15" cy="15" r="13" class="rk"/><path d="M6 24L24 6" class="rk"/><circle cx="15" cy="15" r="13" class="rr"/><path d="M6 24L24 6" class="rr"/></symbol>
<symbol id="clock" viewBox="0 0 30 30"><path d="M9 14V8q0-5 6-5t6 5v6" class="rk"/><path d="M9 14V8q0-5 6-5t6 5v6" class="rr"/><path d="M5 13h20v16H5z" fill="#d00000" stroke="#400"/><path d="M6 18h18M6 22h18M6 26h18" stroke="#900"/></symbol>
<symbol id="chd" viewBox="0 0 30 30"><path d="M2.500 6v18M27.500 6v18M2 15h26" class="rk"/><path d="M2.500 7v16M27.500 7v16M2 15h26" class="rr"/></symbol>
<symbol id="cvd" viewBox="0 0 30 30"><path d="M6 2.500h18M6 27.500h18M15 2v26" class="rk"/><path d="M7 2.500h16M7 27.500h16M15 2v26" class="rr"/></symbol>
<symbol id="cdist" viewBox="0 0 30 30"><path d="M30 0l-3 14-4-3L11 22l2 4-13 4 3-14 4 3L18 7l-2-4z" fill="#d80000" stroke="#400"/></symbol>
<symbol id="cdia" viewBox="0 0 30 30"><circle cx="15" cy="15" r="12.500" class="rk"/><circle cx="15" cy="15" r="12.500" class="rr thin"/><path d="M2 28L28 3" class="rk"/><path d="M3 27L27 4" class="rr"/></symbol>
<symbol id="cang" viewBox="0 0 30 30"><path d="M29 3L3 14l26 13M20 7q4 8 0 16" class="rk"/><path d="M28.500 3.300L4 14l24.500 12.700M20 8q3 7 0 14" class="rr"/></symbol>
<symbol id="csnell" viewBox="0 0 30 30"><path d="M1.500 2.500l10 11L18 28" fill="none" stroke="#999" stroke-width="4.500" stroke-linecap="round"/><path d="M1.500 2.500l10 11L18 28" fill="none" stroke="#ddd" stroke-width="2.500" stroke-linecap="round"/><path d="M0 14.500h30" stroke="#777" stroke-width="4"/><path d="M1 14.500h28" stroke="#999" stroke-width="2"/></symbol>
<symbol id="tdrv" viewBox="0 0 30 30"><path d="M12.500 2.500h15v15h-15z" fill="none" stroke="#0c2650" stroke-width="4.500"/><path d="M12.500 2.500h15v15h-15z" fill="none" stroke="#3f76b8" stroke-width="2.200"/><path d="M2.500 13h14v14h-14z" fill="#f4eeee" stroke="#300" stroke-width="4.500"/><path d="M2.500 13h14v14h-14z" fill="none" stroke="#e01010" stroke-width="2.200"/></symbol>
<symbol id="tact" viewBox="0 0 30 30"><path d="M11 2.500h16v18H11z" fill="none" stroke="#777" stroke-width="4"/><path d="M11 2.500h16v18H11z" fill="none" stroke="#ccc" stroke-width="2"/><path d="M2.500 10h18v17h-18z" fill="none" stroke="#777" stroke-width="4"/><path d="M2.500 10h18v17h-18z" fill="none" stroke="#aaa" stroke-width="2"/><path d="M3 3l23 23" stroke="#555" stroke-width="5"/><path d="M3.500 3.500l22 22" stroke="#999" stroke-width="3.500"/></symbol>
<!-- Small icons -->
<symbol id="sk" viewBox="0 0 18 18"><circle cx="11" cy="6" r="5" fill="none" stroke="#c22" stroke-width="2.200"/><path d="M2 7h9v9H2z" fill="none" stroke="#c22" stroke-width="2.200"/></symbol>
<symbol id="page" viewBox="0 0 15 16"><path d="M1 1.500h12V15H1z" fill="#f0efec" stroke="#c9c9c0"/><circle cx="11" cy="4" r="3.200" fill="#f7ee3c"/></symbol>
<symbol id="chev" viewBox="0 0 14 14"><circle cx="7" cy="7" r="7" fill="#f4f6f8"/><path d="M4 6.500L7 3.700l3 2.800M4 10.500L7 7.700l3 2.800" fill="none" stroke="#2e86c4" stroke-width="1.500"/></symbol>
<symbol id="xx" viewBox="0 0 12 12"><path d="M2 2l8 8M10 2l-8 8" stroke="#777973" stroke-width="3.600"/><path d="M2.300 2.300l7.400 7.400M9.700 2.300L2.300 9.700" stroke="#b4b6b0" stroke-width="1.800"/></symbol>
<symbol id="tick" viewBox="0 0 14 14"><path d="M3.500 6.500l2.500 4 4.500-8" fill="none" stroke="#000" stroke-width="1.800"/></symbol>
</svg>

<header class="titlebar"><h1>FreeCAD 0.19</h1><div class="wm"><span>–</span><span><b></b></span><span class="quit">×</span></div></header>
<nav class="menu"><span><u>F</u>ile</span><span><u>E</u>dit</span><span><u>V</u>iew</span><span><u>T</u>ools</span><span><u>M</u>acro</span><span>S<u>k</u>etch</span><span><u>W</u>indows</span><span><u>H</u>elp</span></nav>

<div class="bar">
<i class="h"></i>
<svg class="b"><use href="#new"/></svg><svg class="b"><use href="#open"/></svg><svg class="b"><use href="#save"/></svg><svg class="b"><use href="#print"/></svg><i class="s"></i>
<svg class="b"><use href="#cut"/></svg><svg class="b"><use href="#copy"/></svg><svg class="b"><use href="#paste"/></svg><i class="s"></i>
<svg class="b"><use href="#undo"/></svg><i class="d"></i><svg class="b"><use href="#redo"/></svg><i class="d off"></i><i class="s"></i>
<svg class="b"><use href="#refresh"/></svg><i class="s"></i><svg class="b"><use href="#what"/></svg>
<i class="h wb"></i><div class="combo workbench"><svg width="18" height="18"><use href="#sk"/></svg>Sketcher<i class="d"></i></div>
<i class="h"></i>
<svg class="b"><use href="#fitall"/></svg><svg class="b"><use href="#fitsel"/></svg><svg class="b"><use href="#style"/></svg><i class="d"></i><svg class="b"><use href="#bbox"/></svg><i class="s"></i>
<svg class="b"><use href="#back"/></svg><svg class="b"><use href="#fwd"/></svg><svg class="b"><use href="#golink"/></svg><i class="d"></i><i class="s"></i>
<svg class="b"><use href="#sync"/></svg><i class="d"></i><svg class="b"><use href="#iso"/></svg><i class="s"></i>
<svg class="b"><use href="#vfront"/></svg><svg class="b"><use href="#vtop"/></svg><svg class="b"><use href="#vright"/></svg><i class="s"></i>
<svg class="b"><use href="#vrear"/></svg><svg class="b"><use href="#vbottom"/></svg><svg class="b"><use href="#vleft"/></svg><i class="s"></i>
<svg class="b"><use href="#ruler"/></svg>
<i class="h st"></i>
<svg class="b"><use href="#part"/></svg><svg class="b"><use href="#group"/></svg><svg class="b"><use href="#lnk"/></svg><svg class="b"><use href="#lnks"/></svg><i class="d off"></i>
</div>

<div class="bar">
<i class="h"></i>
<svg class="b"><use href="#rec"/></svg><svg class="b"><use href="#stop"/></svg><svg class="b"><use href="#edit"/></svg><svg class="b"><use href="#play"/></svg>
<i class="h mid"></i>
<svg class="b"><use href="#skg"/></svg><svg class="b"><use href="#tin"/></svg><svg class="b"><use href="#tout"/></svg><svg class="b"><use href="#skv"/></svg><svg class="b"><use href="#sect"/></svg><svg class="b"><use href="#mapf"/></svg><svg class="b"><use href="#reor"/></svg><svg class="b"><use href="#vali"/></svg><svg class="b"><use href="#merge"/></svg><svg class="b"><use href="#mirr"/></svg><svg class="b"><use href="#stopsign"/></svg>
<i class="h mid"></i>
<svg class="b"><use href="#point"/></svg><svg class="b"><use href="#line"/></svg><svg class="b"><use href="#arc"/></svg><i class="d"></i><svg class="b"><use href="#circ"/></svg><i class="d"></i><svg class="b"><use href="#conic"/></svg><i class="d"></i><svg class="b"><use href="#bsp"/></svg><i class="d"></i><i class="s"></i>
<svg class="b"><use href="#pline"/></svg><svg class="b"><use href="#rect"/></svg><svg class="b"><use href="#hex"/></svg><i class="d"></i><svg class="b"><use href="#slot"/></svg><i class="s"></i>
<svg class="b"><use href="#fillet"/></svg><i class="d"></i><svg class="b"><use href="#trim"/></svg><svg class="b"><use href="#extend"/></svg><svg class="b"><use href="#ext"/></svg><svg class="b"><use href="#carbon"/></svg><svg class="b"><use href="#constr"/></svg>
</div>

<div class="bar">
<i class="h"></i>
<svg class="b"><use href="#dof"/></svg><svg class="b"><use href="#ga"/></svg><svg class="b"><use href="#gb"/></svg><svg class="b"><use href="#gc"/></svg><svg class="b"><use href="#gd"/></svg><svg class="b"><use href="#warn"/></svg><svg class="b"><use href="#bolt"/></svg><svg class="b"><use href="#ell"/></svg><svg class="b"><use href="#symg"/></svg><svg class="b"><use href="#clone"/></svg><i class="d off"></i><svg class="b"><use href="#rarr"/></svg><svg class="b"><use href="#delc"/></svg>
<i class="h mid"></i>
<svg class="b"><use href="#bpoly"/></svg><i class="d"></i><svg class="b"><use href="#bdeg"/></svg><svg class="b"><use href="#bk1"/></svg><svg class="b"><use href="#bk2"/></svg><svg class="b"><use href="#bk3"/></svg><i class="d"></i>
<i class="h mid"></i><svg class="b"><use href="#vspace"/></svg>
<i class="h mid"></i>
<svg class="b"><use href="#coin"/></svg><svg class="b"><use href="#pon"/></svg><svg class="b"><use href="#cv"/></svg><svg class="b"><use href="#ch"/></svg><svg class="b"><use href="#cpar"/></svg><svg class="b"><use href="#cperp"/></svg><svg class="b"><use href="#ctan"/></svg><svg class="b"><use href="#ceq"/></svg><svg class="b"><use href="#csym"/></svg><svg class="b"><use href="#cblk"/></svg><i class="s"></i>
<svg class="b"><use href="#clock"/></svg><svg class="b"><use href="#chd"/></svg><svg class="b"><use href="#cvd"/></svg><svg class="b"><use href="#cdist"/></svg><svg class="b"><use href="#cdia"/></svg><i class="d"></i><svg class="b"><use href="#cang"/></svg><svg class="b"><use href="#csnell"/></svg><i class="s"></i>
<svg class="b"><use href="#tdrv"/></svg><svg class="b"><use href="#tact"/></svg>
</div>

<main>
<aside>
<div class="dock">Combo View<svg width="12" height="12" viewBox="0 0 12 12"><g fill="none" stroke="#555"><rect x=".5" y=".5" width="11" height="11" rx="2"/><rect x="2.500" y="4.500" width="5" height="5"/><path d="M4.500 4.500v-2h5v5h-2"/></g></svg></div>
<div class="tabs"><span class="tab">Model</span><span class="tab on"><svg width="16" height="16" viewBox="0 0 16 16"><path d="M1 4l4-3 8 8 2 6-6-2z" fill="#2a4f7e" stroke="#1c3350"/><path d="M13 10l2 5-5-2z" fill="#ddd"/></svg>Tasks</span></div>
<div class="pane">
<div class="tasks">
<button class="btn close"><svg width="12" height="12"><use href="#xx"/></svg><span><u>C</u>lose</span></button>

<section class="g1"><h2><svg width="15" height="16"><use href="#page"/></svg>Solver messages<svg class="c" width="14" height="14"><use href="#chev"/></svg></h2>
<div class="body"><p class="ok">Fully constrained sketch</p><p class="ok">Solved in 0 sec</p>
<label class="ck1"><i class="cb"><svg width="14" height="14"><use href="#tick"/></svg></i>Auto remove redundants</label>
<div class="row"><label><i class="cb"><svg width="14" height="14"><use href="#tick"/></svg></i>Auto update</label><button class="btn field">Update</button></div></div></section>

<section class="g2"><h2><svg width="15" height="16"><use href="#page"/></svg>Edit controls<svg class="c" width="14" height="14"><use href="#chev"/></svg></h2></section>

<section class="g3"><h2><svg width="15" height="16"><use href="#page"/></svg>Constraints<svg class="c" width="14" height="14"><use href="#chev"/></svg></h2>
<div class="body"><div class="row"><span>Filter:</span><div class="combo field">All<i class="d"></i></div></div>
<label class="ck2"><i class="cb"><svg width="14" height="14"><use href="#tick"/></svg></i>Hide internal alignment</label>
<label class="ck3"><i class="cb"></i>Extended information</label>
<ul class="list cons">
<li><i class="cb"><svg width="14" height="14"><use href="#tick"/></svg></i><svg width="24" height="24"><use href="#pon"/></svg>Constraint1</li>
<li><i class="cb"><svg width="14" height="14"><use href="#tick"/></svg></i><svg width="24" height="24"><use href="#cdia"/></svg>Constraint2 (6 mm)</li>
<li><i class="cb"><svg width="14" height="14"><use href="#tick"/></svg></i><svg width="24" height="24"><use href="#chd"/></svg>Constraint3 (7 mm)</li>
</ul></div></section>

<section class="g4"><h2><svg width="15" height="16"><use href="#page"/></svg>Elements<svg class="c" width="14" height="14"><use href="#chev"/></svg></h2>
<div class="body"><div class="row"><span>Type:</span><div class="combo field dis">Edge<i class="d off"></i></div></div>
<div class="row mode"><span>Mode:</span><div class="combo field">All<i class="d"></i></div></div>
<ul class="list elems">
<li><svg width="24" height="24" viewBox="0 0 24 24"><circle cx="12" cy="12" r="9" fill="#fff" stroke="#2c5a08" stroke-width="4"/><circle cx="12" cy="12" r="9" fill="none" stroke="#76b82a" stroke-width="2"/><circle cx="12" cy="12" r="3.500" fill="#d11" stroke="#600"/></svg>1-Circle</li>
<li><svg width="24" height="24" viewBox="0 0 24 24"><path d="M5 20L20 4" stroke="#2c5a08" stroke-width="4"/><path d="M5 20L20 4" stroke="#76c82a" stroke-width="2"/><circle cx="4.500" cy="20" r="3.600" fill="#d818d8" stroke="#606"/><circle cx="20" cy="4" r="3.600" fill="#d818d8" stroke="#606"/></svg>2-Line</li>
</ul></div></section>
</div>
<div class="scroll"><i class="up"></i><div class="thumb"></div><i class="down"></i></div>
</div>
</aside>
<div class="splitter"></div>
<div class="docarea">
<svg class="view" width="1443" height="774" viewBox="477 189 1443 774">
<defs>
<linearGradient id="lipT" x2="0" y2="1"><stop stop-color="#5c5c5c"/><stop offset=".6" stop-color="#c4c4c4"/><stop offset="1" stop-color="#d6d6d6"/></linearGradient>
<linearGradient id="lipB" x2="0" y2="1"><stop stop-color="#d6d6d6"/><stop offset=".5" stop-color="#bbb"/><stop offset="1" stop-color="#5c5c5c"/></linearGradient>
<g id="vent"><path d="M1045 -4.300h69l4 4.300-4 4.300h-69l-2.500-2.500v-3.600z" fill="#d7d7d7" stroke="#1a1a1a" stroke-width="1.800"/><path d="M1046-3.500h8l-1.500 3.500 1.500 3.500h-8l-2.500-2v-3z" fill="#505050"/><path d="M1054-4l-1.500 4 1.500 4" fill="none" stroke="#1a1a1a"/></g>
<g id="inner"><path d="M1230-4.300h66v8.600h-66l-4-4.300z" fill="#455ba5" stroke="#1a1a1a" stroke-width="1.800"/><path d="M1230-4h6.500v8h-6.500l-3.500-4z" fill="#505050" stroke="#1a1a1a" stroke-width="1.200"/></g>
<g id="half">
<path d="M1207 351h28l7 19h-30l-5.500-14z" fill="#8f8f8f"/>
<path d="M1270 370l6-14 4 10" fill="#d7d7d7" stroke="none"/>
<path d="M1275.500 356l4.500 10.500h-8.500z" fill="#455ba5"/><path d="M1270.500 366.500h9" />
<path d="M1206 355l1-4h28l7 19M1205.500 355l6.500 15h58.500l6-15"/>
<path d="M1276 355l1-4h28l18 46.500h-30.500z" fill="#8f8f8f"/>
<path d="M1292.500 397.500h30.500V465h-30.500z" fill="#c6c6c6"/>
<path d="M1292.500 465h30.500l-8 20h-30z" fill="#8f8f8f"/>
</g>
</defs>
<rect x="477" y="189" width="1443" height="774" fill="#455ba5"/>
<path d="M1027 279h135v478h-135z" fill="#d7d7d7"/>
<path d="M1027 279h133v11h-133z" fill="url(#lipT)"/><path d="M1027 746h133v11h-133z" fill="url(#lipB)"/>
<path d="M1027 290v-11h135M1027 290h132M1027 746h132M1027 746v11h135" fill="none" stroke="#1a1a1a" stroke-width="1.800"/>
<path d="M1162 279h187l3 5v468l-3 5h-187l-3-5V284z" fill="#5c5c5c" stroke="#1a1a1a" stroke-width="1.800"/>
<use href="#vent" y="340"/><use href="#vent" y="362"/><use href="#vent" y="384.500"/><use href="#vent" y="406.500"/><use href="#vent" y="429"/>
<use href="#vent" y="607"/><use href="#vent" y="629.500"/><use href="#vent" y="651.500"/><use href="#vent" y="673.500"/><use href="#vent" y="696"/>
<path d="M1205.500 355L1188.500 397V465l8 19v68l-8 19v67l17.500 43 6-15h58.500l6 15 16-43v-67l-7-19v-68l7-19v-68l-16-43-6 15h-58.500z" fill="#d7d7d7" stroke="#1a1a1a" stroke-width="1.800"/>
<use href="#inner" y="384.500"/><use href="#inner" y="406.500"/><use href="#inner" y="429"/><use href="#inner" y="607"/><use href="#inner" y="629.500"/><use href="#inner" y="651.500"/>
<g fill="none" stroke="#1a1a1a" stroke-width="1.800" stroke-linejoin="round"><use href="#half"/><use href="#half" transform="matrix(1 0 0 -1 0 1036)"/><path d="M1285.500 485h29.500v66h-29.500z" fill="#c6c6c6"/>
<g fill="#b8b8b8"><path d="M1256 341q4 3 4 10t-4 10q-4-3-4-10t4-10zM1252 351h8M1256 675q4 3 4 10t-4 10q-4-3-4-10t4-10zM1252 685h8M1188.500 508q4 4 4 10t-4 10q-4-4-4-10t4-10zM1323 508q4 4 4 10t-4 10q-4-4-4-10t4-10z"/></g></g>
<path d="M477 518h1443" stroke="#d2646e" stroke-width="1.700"/><path d="M1256 189v774" stroke="#72ff80" stroke-width="2"/>
<path d="M1027 290v222" stroke="#ff2600" stroke-width="2"/><path d="M1027 512v235" stroke="#cf3474" stroke-width="2"/>
<g fill="#0f0"><circle cx="1027" cy="290" r="7"/><circle cx="1027" cy="747" r="7"/><circle cx="1256" cy="518" r="7"/><circle cx="1066" cy="518" r="7"/></g>
<circle cx="1066" cy="518" r="17" fill="none" stroke="#0f0" stroke-width="2.300"/>
<g stroke="#ff2600" fill="#ff2600"><path d="M996 486h22M1076 486h24M1066 460v58" stroke-width="1.700"/><path d="M1016 480.500l11 5.500-11 5.500zM1077 480.500l-11 5.500 11 5.500z" stroke="none"/><path d="M1052 507l35 26" stroke-width="1.500"/><path d="M1051 508l14 2-7 9zM1078 527l-5-12-7 9z" stroke="none"/><path d="M1060 504q0-10 11-10" fill="none" stroke-width="1.800"/><circle cx="1062" cy="496" r="3" stroke="none"/></g>
<text x="932" y="494" class="dim" textLength="58" lengthAdjust="spacingAndGlyphs">7 mm</text>
<text class="dim" transform="translate(1087 547.500) rotate(36)" textLength="74" lengthAdjust="spacingAndGlyphs">⌀6 mm</text>
<!-- Navigation cube -->
<g fill="#94a1ca"><path d="M1847.500 196l12 12h-24zM1847.500 328l12-12h-24zM1782 262l11-11.500v23zM1913 262l-12-12v24z"/><path d="M1828 203l2 7q-15 6-23 17l4 3-13 1 1-15 3 2q10-11 26-15zM1867 203l-2 7q15 6 23 17l-4 3 12 1-1-15-3 2q-10-11-25-15z"/></g>
<path d="M1817 233l36-5 18 4 6 8 1 9v38l-6 8-16 1-38-6-9-9v-34z" fill="#8796c4"/><path d="M1809 242q1-5 6-5h42q8 0 12 3l8 5v33l-8 7-6 2-48-2-6-5z" fill="#a9b4d8"/><rect x="1814" y="238" width="43" height="48" rx="7" fill="#ccd2e6"/><path d="M1857 240h11v44h-11z" fill="#8290c3"/><path d="M1869 238l5 1 3 10v26l-4 10h-4z" fill="#ccd2e6"/><ellipse cx="1861" cy="234" rx="7.500" ry="5.500" fill="#ccd2e6"/><ellipse cx="1861" cy="290" rx="7.500" ry="5.500" fill="#ccd2e6"/><path d="M1832 239l5 9 6-9M1832 285l5-9 6 9" fill="none" stroke="#e6eaf5" stroke-width="1.500"/><path d="M1837 248v28" stroke="#a9b4d8" stroke-width="1.500"/>
<text transform="translate(1839 274) rotate(-90)" textLength="24" lengthAdjust="spacingAndGlyphs" class="face">LEFT</text>
<path d="M1870 266v-3M1870 257h3v4M1874 257q3 2 3 8" fill="none" stroke="#000" stroke-width="1.800"/>
<path d="M1819 227l49-6" stroke="#00f" stroke-width="2"/><path d="M1868 221l11 12" stroke="#f00" stroke-width="1.800"/><path d="M1868 221v60" stroke="#0f0" stroke-width="2"/>
<text x="1805" y="230" class="ax" fill="#22f">Z</text><text x="1883" y="236" class="ax" fill="#f00">X</text><text x="1870" y="304" class="ax" fill="#0f0">Y</text>
<path d="M1870 306l10-3 10 3v12l-10 4-10-4z" fill="#8492be"/><path d="M1870 306l10 3v13l-10-4z" fill="#727fb0"/><path d="M1870 306l10-3 10 3-10 3z" fill="#a4afd0"/><path d="M1894 310h12l-6 6z" fill="#3b4770"/>
<!-- Axis cross -->
<path d="M1860 926h21" stroke="#222290" stroke-width="2"/><path d="M1860 926l7-3v6z" fill="#222290"/><path d="M1881 926h7" stroke="#902020" stroke-width="2"/><path d="M1890 926l-5-3v6z" fill="#902020"/><path d="M1881 925v26" stroke="#209020" stroke-width="2"/><path d="M1881 951l-3-7h6z" fill="#209020"/>
<text x="1861" y="926" class="ax">Z</text><text x="1891" y="926" class="ax">X</text><text x="1883" y="953" class="ax">Y</text>
</svg>
<div class="doctabs"><span class="doctab"><svg width="16" height="16" viewBox="0 0 16 16"><path d="M1 1h9v3H5v3h4v3H5v5H1z" fill="#d01c1c" stroke="#700"/><circle cx="11" cy="10.500" r="3.500" fill="none" stroke="#4068a8" stroke-width="2.600"/><path d="M11 5v11M5.500 10.500h11M7 6.500l8 8M15 6.500l-8 8" stroke="#4068a8"/><circle cx="11" cy="10.500" r="1.500" fill="#fff"/></svg><span>NSPanelBox_002 : 1*</span><svg width="12" height="12"><use href="#xx"/></svg></span></div>
</div>
</main>
<footer><span>Preselected: NSPanelBox_002.Sketch006.Constraint3 (-57.229603 mm,-3.764636 mm,32.264938 mm)</span>
<span class="right"><svg width="10" height="14" viewBox="0 0 10 14"><rect x="1" y="1" width="8" height="12" rx="3" fill="#fff" stroke="#333" stroke-width="1.400"/><path d="M5 3v3" stroke="#333" stroke-width="1.500"/></svg>Revit<i class="d"></i><span class="size">259,33 mm x 139,28 mm</span></span></footer>
</body>
</html>
```
FILE: styles.css
```css
*{box-sizing:border-box}
body{margin:0;width:1920px;height:1025px;overflow:hidden;display:flex;flex-direction:column;background:#efefef;color:#111;font:12px/16px "DejaVu Sans",sans-serif}
h1,h2,p,ul{margin:0;padding:0}
u{text-decoration:underline;text-underline-offset:2px}
.defs{position:absolute}
.titlebar{height:28px;flex:none;background:linear-gradient(#3b3a36,#4b4943);display:grid;grid-template-columns:1fr auto 1fr;align-items:center}
.titlebar h1{grid-column:2;font-size:12.500px;font-weight:bold;color:#dfdbd2}
.wm{justify-self:end;display:flex;gap:4px;margin-right:5px}
.wm span{width:16px;height:16px;border-radius:50%;background:linear-gradient(#8a8880,#66645d);color:#33322e;display:flex;align-items:center;justify-content:center;font-weight:bold;line-height:14px}
.wm b{width:8px;height:7px;border:1.500px solid #33322e}
.wm .quit{background:linear-gradient(#f2805e,#dd4a18);color:#4a1a08}
.menu{height:20px;flex:none;display:flex;gap:15px;padding:2px 0 0 10px;border-bottom:1px solid #cfcfcf}
.bar{height:47px;flex:none;display:flex;align-items:center;background:linear-gradient(#f8f8f8,#ececec);border-bottom:1px solid #b2b2b2;box-shadow:inset 0 1px #fff}
.b{width:30px;height:30px;margin:0 5.500px;flex:none;overflow:visible}
.h{width:4px;height:17px;flex:none;margin:0 4.200px 0 5px;background:radial-gradient(circle,#bbb 30%,transparent 35%) 0 0/2.500px 3px;opacity:.8}
.h.mid{margin:0 3px 0 8.400px}
.h.wb{margin:0 4px 0 9px}
.h.st{margin:0 3.800px 0 9.500px}
.s{width:6.500px;height:27px;flex:none;background:linear-gradient(90deg,transparent 2px,#d2d2d2 2px 3px,#fff 3px 4px,transparent 4px)}
.d{width:12.300px;flex:none;display:flex}
.d::after{content:"";border:4px solid transparent;border-top:4.500px solid #555;border-bottom:0;margin-left:1.500px}
.d.off::after{border-top-color:#cacaca}
.combo,.btn{border:1px solid #a9a9a9;border-radius:3px;background:linear-gradient(#fff,#ededed);display:flex;align-items:center;font:inherit;color:inherit;padding:0}
.workbench{width:172px;height:24px;padding-left:5px;gap:3px;margin-right:3.300px;flex:none}
.combo .d{margin-left:auto;margin-right:4px}
.k{fill:none;stroke:#444;stroke-width:4}
.w{fill:none;stroke:#f3f3f0;stroke-width:2}
.sk3{fill:none;stroke:#8a8a8a;stroke-width:2.600}
.rk{fill:none;stroke:#3c0000;stroke-width:5.200}
.rr{fill:none;stroke:#dc0808;stroke-width:3}
.rk.fat{stroke-width:7}
.rr.fat{stroke-width:4.800}
.rr.thin{stroke-width:2}
.doft{font:11px "DejaVu Sans",sans-serif;fill:#2a3fae}
main{flex:1;display:flex;min-height:0}
aside{width:471px;flex:none;display:flex;flex-direction:column;height:806px}
.dock{height:19px;display:flex;justify-content:space-between;align-items:center;padding:2px 2px 0 4px}
.tabs{display:flex;align-items:flex-end;height:27px;padding-left:0}
.tab{height:25px;width:61px;border:1px solid #b0b0b0;border-bottom:0;border-radius:3px 3px 0 0;background:#e6e6e6;padding:5px 0 0 11px}
.tab.on{width:78px;height:27px;background:#f9f9f9;display:flex;gap:4px;padding:5px 0 0 11px;margin-bottom:-1px;z-index:1}
.tab.on svg{margin-top:-1px}
.pane{flex:1;min-height:0;display:flex;border:1px solid #aaa;background:#fff;padding:1px 1px 0 1px}
.tasks{flex:1;height:100%;overflow:hidden;border:1px solid #aaa;border-width:1px 0 0 1px;background:linear-gradient(#cdcdcd,#9d9d9d 330px);padding:16px 8px 0 8px;display:flex;flex-direction:column}
.scroll{width:15px;border:1px solid #b0b0b0;display:flex;flex-direction:column;background:#e2e2e2}
.scroll i{height:14px;flex:none;background:#f6f6f6;display:flex;justify-content:center;align-items:center}
.scroll i::after{content:"";border:4px solid transparent;border-top:0;border-bottom:4.500px solid #555}
.scroll .down{margin-top:auto;border-top:1px solid #b0b0b0}
.scroll .down::after{border-bottom:0;border-top:4.500px solid #555}
.thumb{height:557px;background:linear-gradient(90deg,#fff,#ececec);border:1px solid #b0b0b0;border-width:1px 0}
.close{width:79px;height:24px;align-self:center;gap:3px;padding-left:16px;flex:none}
section{flex:none}
h2{height:25px;border:1px solid #fff;border-radius:4px 4px 0 0;background:linear-gradient(90deg,#308cc6,#66c4ff);color:#fff;font-size:12px;font-weight:bold;display:flex;align-items:center;gap:2px;padding:0 3px 0 6px}
h2 .c{margin-left:auto}
.body{background:#efefef;padding:0 14px}
.g1{margin-top:18px}.g1 .body{height:119px;padding-top:12px}
.ok{color:#0a8a0a;height:21px}
.g2,.g3{margin-top:9px}
.g3{margin-top:10px}.g3 .body{height:297px;padding-top:12px}
.g4{margin-top:8px}.g4 .body{padding-top:12px}
label{display:flex;align-items:center;gap:5px}
.ck1{height:20px;margin-top:1px;margin-bottom:6px}
.cb{width:14px;height:14px;border:1px solid #b5b5b5;background:#fff;flex:none;display:flex;overflow:visible}
.cb svg{margin:-1px;flex:none}
.row{display:flex;justify-content:space-between;align-items:center;height:24px}
.field{width:200px;height:23px;justify-content:center}
.combo.field{justify-content:flex-start;padding-left:4px}
.dis{color:#bcbcbc;border-color:#c6c6c6}
.ck2{margin-top:7px;height:18px}
.ck3{margin-top:9px;height:18px}
.mode{margin-top:5px}
.list{list-style:none;background:#fff;border:1px solid #b0b0b0}
.list li{display:flex;align-items:center;height:26px}
.cons{height:187px;margin-top:7px;padding:1px 0 0 3px}
.cons .cb{margin-right:6px}
.cons li>svg{margin-right:6px}
.elems{height:150px;margin-top:5px;padding:1px 0 0 2px}
.elems svg{margin-right:7px}
.splitter{width:6px;background:radial-gradient(circle,#aaa 30%,transparent 35%) center 397px/3px 4px no-repeat}
.docarea{flex:1;display:flex;flex-direction:column}
.view{display:block;flex:none}
.dim{font:22px "Liberation Sans",Arial,sans-serif;fill:#dc3a20;stroke:#dc3a20;stroke-width:.3}
.face{font:bold 12px "DejaVu Sans Mono",monospace;fill:#000}
.ax{font:10.500px "DejaVu Sans",sans-serif}
.doctabs{flex:none;height:32px;margin-top:2px;border-top:1px solid #b0b0b0}
.doctab{width:195px;height:30px;margin-top:-1px;background:#f7f7f7;border:1px solid #b0b0b0;border-top:0;border-radius:0 0 3px 3px;display:flex;align-items:center;padding-left:11px;padding-top:1px}
.doctab span{width:138px;padding-left:4px}
footer{height:28px;flex:none;display:flex;justify-content:space-between;align-items:center;padding:1px 1px 0 2px}
.right{display:flex;align-items:center;gap:4px}
.size{margin-left:1px}
```
